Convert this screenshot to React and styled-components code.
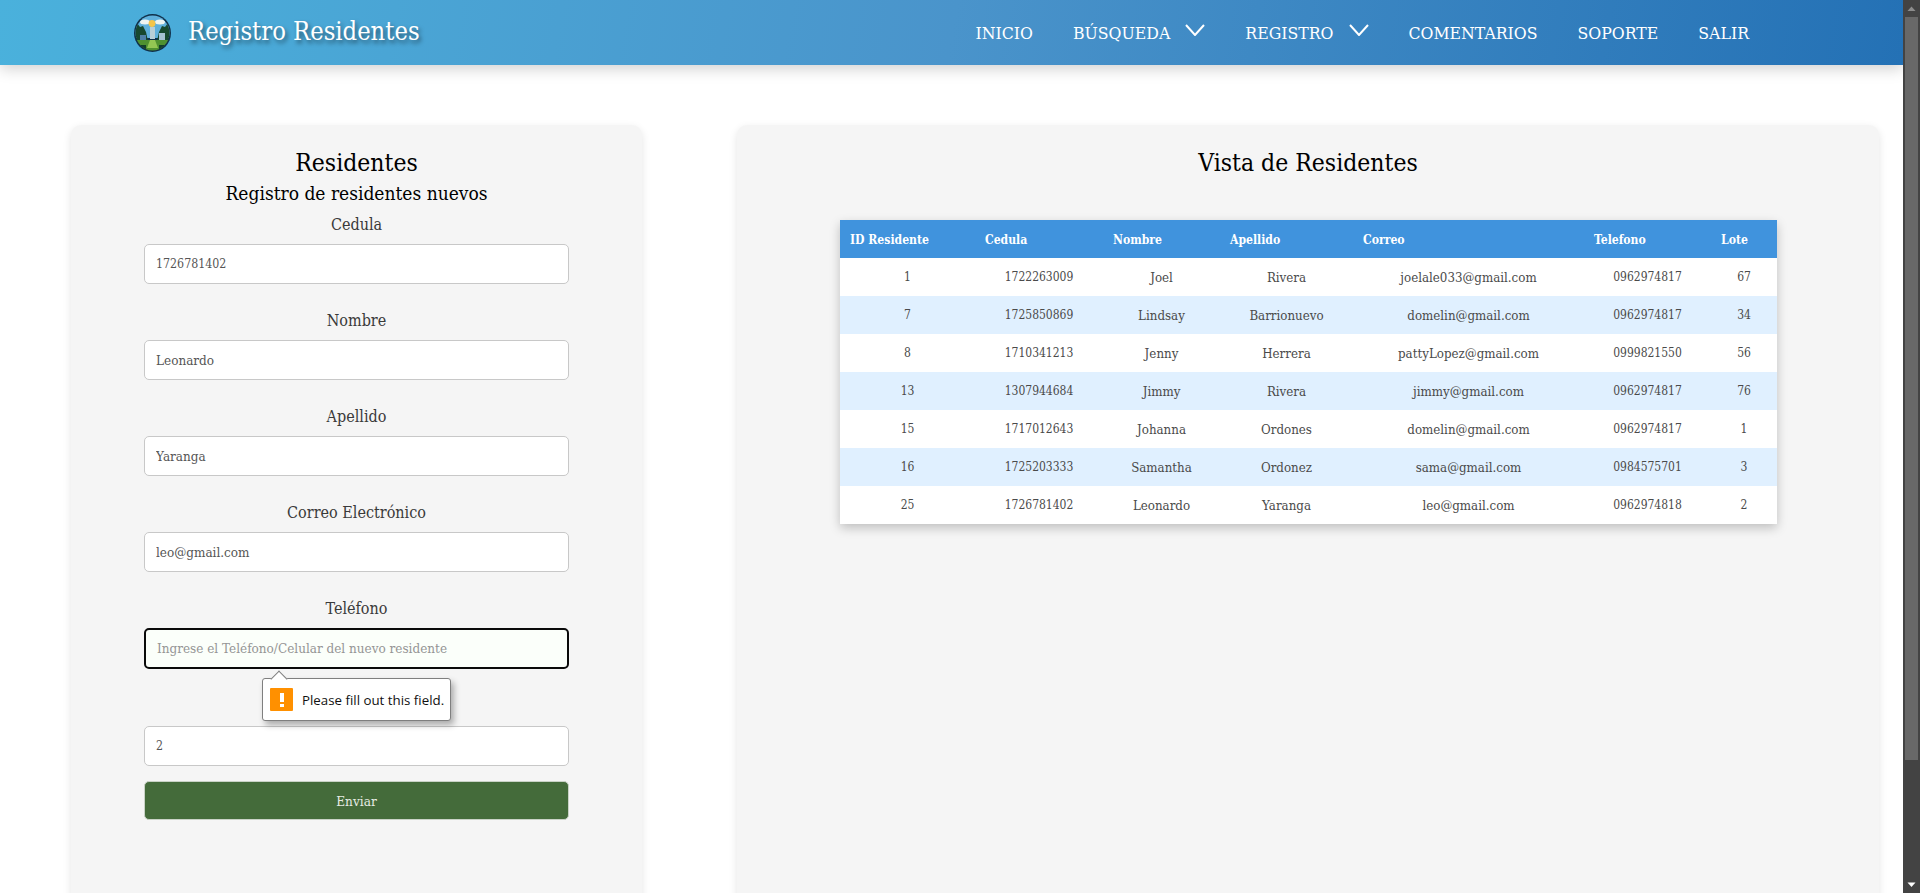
import React from "react";
import styled, { createGlobalStyle } from "styled-components";

const SLAB = `"DejaVu Serif", "Liberation Serif", serif`;

const GlobalStyle = createGlobalStyle`
  html, body { margin: 0; padding: 0; height: 100%; overflow: hidden; background: #fff; }
  * { box-sizing: border-box; }
`;

const Page = styled.div`
  display: flex;
  height: 100vh;
  overflow: hidden;
  font-family: ${SLAB};
  font-stretch: condensed;
`;

const Main = styled.div`
  flex: 1;
  min-width: 0;
  overflow: hidden;
`;

const Navbar = styled.header`
  height: 65px;
  display: flex;
  align-items: center;
  justify-content: space-between;
  padding: 0 154px 0 134px;
  background: linear-gradient(100deg, #4ab1dc 0%, #4a94cb 50%, #2471b5 100%);
  box-shadow: 0 4px 14px rgba(0, 0, 0, 0.18);
  position: relative;
`;

const Brand = styled.div`
  display: flex;
  align-items: center;
  gap: 17px;
  color: #fff;
  font-size: 25.3px;
  text-shadow: 2px 3px 4px rgba(0, 0, 0, 0.5);
`;

const BrandName = styled.span`
  padding-bottom: 2px;
`;

const Nav = styled.nav`
  display: flex;
  align-items: center;
  gap: 40px;
`;

const NavItem = styled.a`
  display: flex;
  align-items: center;
  gap: 15px;
  color: #fff;
  font-size: 17.5px;
  white-space: nowrap;
`;

const Chevron = styled.svg`
  width: 20px;
  height: 12px;
  margin-top: -6px;
  fill: none;
  stroke: #fff;
  stroke-width: 2;
`;

const Content = styled.main`
  display: flex;
  gap: 95px;
  padding: 60px 24px 0 71px;
`;

const Card = styled.section`
  flex: ${(p) => (p.$wide ? "1" : "0 0 571px")};
  min-height: 900px;
  padding-top: 20px;
  background: #f5f5f5;
  border-radius: 10px;
  box-shadow: 0 3px 8px rgba(0, 0, 0, 0.11);
`;

const Title = styled.h1`
  margin: 0;
  font-size: 24.5px;
  font-weight: 400;
  line-height: 36px;
  text-align: center;
  color: #000;
`;

const Subtitle = styled.h2`
  margin: 0 0 3px;
  font-size: 19px;
  font-weight: 400;
  line-height: 24px;
  text-align: center;
  color: #000;
`;

const Form = styled.form`
  display: flex;
  flex-direction: column;
  padding: 0 73px;
`;

const Field = styled.div`
  position: relative;
  display: flex;
  flex-direction: column;
  margin-bottom: ${(p) => p.$gap || "20px"};
`;

const Label = styled.label`
  height: 36px;
  padding-top: 6px;
  font-size: 16px;
  line-height: 22px;
  text-align: center;
  color: #3a3a3a;
`;

const Input = styled.input`
  height: ${(p) => (p.$focused ? "41px" : "40px")};
  padding: 0 11px;
  font-family: inherit;
  font-stretch: condensed;
  font-size: ${(p) => (p.$numeric ? "12.3px" : "13.4px")};
  color: #555;
  background: ${(p) => (p.$focused ? "#fbfffa" : "#fff")};
  border: ${(p) => (p.$focused ? "2px solid #0a0a0a" : "1px solid #c8c8c8")};
  border-radius: 5px;
  outline: none;
  &::placeholder { color: #959595; opacity: 1; }
`;

const SubmitButton = styled.button`
  height: 39px;
  font-family: inherit;
  font-stretch: condensed;
  font-size: 13.5px;
  color: #e6ece4;
  background: #446b3a;
  border: 1px solid #c9d2c6;
  border-radius: 5px;
`;

const Tooltip = styled.div`
  position: absolute;
  top: 86px;
  left: 118px;
  width: 189px;
  height: 43px;
  display: flex;
  align-items: center;
  gap: 9px;
  padding-left: 7px;
  font-family: "Open Sans", "Noto Sans", sans-serif;
  font-stretch: normal;
  font-size: 13.3px;
  color: #111;
  background: #fff;
  border: 1px solid #7f7f7f;
  border-radius: 3px;
  box-shadow: 3px 4px 6px rgba(0, 0, 0, 0.3);
  z-index: 2;
  &::before {
    content: "";
    position: absolute;
    top: -6px;
    left: 10px;
    width: 11px;
    height: 11px;
    background: #fff;
    border-top: 1px solid #7f7f7f;
    border-left: 1px solid #7f7f7f;
    transform: rotate(45deg);
  }
`;

const WarnIcon = styled.span`
  flex: none;
  width: 23px;
  height: 23px;
  display: flex;
  flex-direction: column;
  align-items: center;
  justify-content: center;
  gap: 2px;
  background: #ff9000;
  border-radius: 1px;
  &::before { content: ""; width: 4px; height: 9px; background: #fff; }
  &::after { content: ""; width: 4px; height: 3px; background: #fff; }
`;

const TableWrap = styled.div`
  margin: 39px 102px 0 103px;
  box-shadow: 0 4px 10px rgba(0, 0, 0, 0.22);
`;

const Table = styled.table`
  width: 100%;
  table-layout: fixed;
  border-collapse: collapse;
`;

const Th = styled.th`
  height: 38px;
  padding: 1px 0 0 10px;
  font-size: 12.1px;
  font-weight: 700;
  text-align: left;
  color: #fff;
  background: #4093dd;
`;

const Row = styled.tr`
  background: ${(p) => (p.$striped ? "#e0f0ff" : "#fff")};
`;

const Td = styled.td`
  height: 38px;
  padding: 0;
  font-size: ${(p) => (p.$numeric ? "12px" : "13.2px")};
  text-align: center;
  color: #4a4a4a;
`;

const Scrollbar = styled.aside`
  flex: 0 0 17px;
  display: flex;
  flex-direction: column;
  align-items: center;
  background: #434343;
`;

const ScrollArrow = styled.svg`
  flex: none;
  width: 17px;
  height: 17px;
  fill: ${(p) => p.$color};
`;

const ScrollThumb = styled.div`
  width: 13px;
  height: 743px;
  margin-bottom: auto;
  background: #686868;
`;

const columns = [
  ["ID Residente", 135],
  ["Cedula", 128],
  ["Nombre", 117],
  ["Apellido", 133],
  ["Correo", 231],
  ["Telefono", 127],
  ["Lote", 66],
];

const residents = [
  [1, "1722263009", "Joel", "Rivera", "joelale033@gmail.com", "0962974817", 67],
  [7, "1725850869", "Lindsay", "Barrionuevo", "domelin@gmail.com", "0962974817", 34],
  [8, "1710341213", "Jenny", "Herrera", "pattyLopez@gmail.com", "0999821550", 56],
  [13, "1307944684", "Jimmy", "Rivera", "jimmy@gmail.com", "0962974817", 76],
  [15, "1717012643", "Johanna", "Ordones", "domelin@gmail.com", "0962974817", 1],
  [16, "1725203333", "Samantha", "Ordonez", "sama@gmail.com", "0984575701", 3],
  [25, "1726781402", "Leonardo", "Yaranga", "leo@gmail.com", "0962974818", 2],
];

const Logo = () => (
  <svg width="37" height="38" viewBox="0 0 37 38">
    <defs>
      <clipPath id="logoClip">
        <ellipse cx="18.5" cy="19" rx="17" ry="17.5" />
      </clipPath>
    </defs>
    <ellipse cx="18.5" cy="19" rx="18.5" ry="19" fill="#10304a" />
    <g clipPath="url(#logoClip)">
      <rect width="37" height="24" fill="#5fb0dc" />
      <ellipse cx="11" cy="8" rx="5" ry="2.5" fill="#eef4f2" />
      <ellipse cx="26" cy="8" rx="5" ry="2.5" fill="#eef4f2" />
      <circle cx="18" cy="9.5" r="3.4" fill="#f6c54a" />
      <path d="M0 27V12l3-3 3 4 3-1 3 6 2 9zM37 27V12l-3-3-3 4-3-1-3 6-2 9z" fill="#17482f" />
      <rect x="16" y="13" width="5" height="12" fill="#b9cfd8" />
      <rect x="6" y="21" width="6" height="5" fill="#4f7fa6" />
      <rect x="25" y="19" width="6" height="7" fill="#a5c0d2" />
      <rect y="26" width="37" height="12" fill="#4f9130" />
      <path d="M13 34l3-8h5l3 8z" fill="#93c653" />
      <path d="M3 31h9v7H3zM25 31h9v7h-9z" fill="#123f2a" />
    </g>
  </svg>
);

const ChevronDown = () => (
  <Chevron viewBox="0 0 20 12">
    <path d="M1 1l9 10 9-10" />
  </Chevron>
);

const App = () => {
  return (
    <Page>
      <GlobalStyle />
      <Main>
        <Navbar>
          <Brand>
            <Logo />
            <BrandName>Registro Residentes</BrandName>
          </Brand>
          <Nav>
            <NavItem>INICIO</NavItem>
            <NavItem>
              BÚSQUEDA
              <ChevronDown />
            </NavItem>
            <NavItem>
              REGISTRO
              <ChevronDown />
            </NavItem>
            <NavItem>COMENTARIOS</NavItem>
            <NavItem>SOPORTE</NavItem>
            <NavItem>SALIR</NavItem>
          </Nav>
        </Navbar>
        <Content>
          <Card>
            <Title>Residentes</Title>
            <Subtitle>Registro de residentes nuevos</Subtitle>
            <Form>
              <Field>
                <Label>Cedula</Label>
                <Input $numeric readOnly defaultValue="1726781402" />
              </Field>
              <Field>
                <Label>Nombre</Label>
                <Input readOnly defaultValue="Leonardo" />
              </Field>
              <Field>
                <Label>Apellido</Label>
                <Input readOnly defaultValue="Yaranga" />
              </Field>
              <Field>
                <Label>Correo Electrónico</Label>
                <Input readOnly defaultValue="leo@gmail.com" />
              </Field>
              <Field $gap="21px">
                <Label>Teléfono</Label>
                <Input
                  $focused
                  readOnly
                  placeholder="Ingrese el Teléfono/Celular del nuevo residente"
                />
                <Tooltip>
                  <WarnIcon />
                  Please fill out this field.
                </Tooltip>
              </Field>
              <Field $gap="15px">
                <Label>Lote</Label>
                <Input $numeric readOnly defaultValue="2" />
              </Field>
              <SubmitButton type="button">Enviar</SubmitButton>
            </Form>
          </Card>
          <Card $wide>
            <Title>Vista de Residentes</Title>
            <TableWrap>
              <Table>
                <colgroup>
                  {columns.map(([name, width]) => (
                    <col key={name} width={width} />
                  ))}
                </colgroup>
                <thead>
                  <tr>
                    {columns.map(([name]) => (
                      <Th key={name}>{name}</Th>
                    ))}
                  </tr>
                </thead>
                <tbody>
                  {residents.map((row, i) => (
                    <Row key={row[0]} $striped={i % 2 === 1}>
                      {row.map((cell, j) => (
                        <Td key={j} $numeric={typeof cell === "number" || /^\d+$/.test(cell)}>
                          {cell}
                        </Td>
                      ))}
                    </Row>
                  ))}
                </tbody>
              </Table>
            </TableWrap>
          </Card>
        </Content>
      </Main>
      <Scrollbar>
        <ScrollArrow viewBox="0 0 17 17" $color="#8c8c8c">
          <path d="M4.5 11L8.5 6.5L12.5 11z" />
        </ScrollArrow>
        <ScrollThumb />
        <ScrollArrow viewBox="0 0 17 17" $color="#fff">
          <path d="M4.5 6.5L8.5 11L12.5 6.5z" />
        </ScrollArrow>
      </Scrollbar>
    </Page>
  );
};

export default App;
